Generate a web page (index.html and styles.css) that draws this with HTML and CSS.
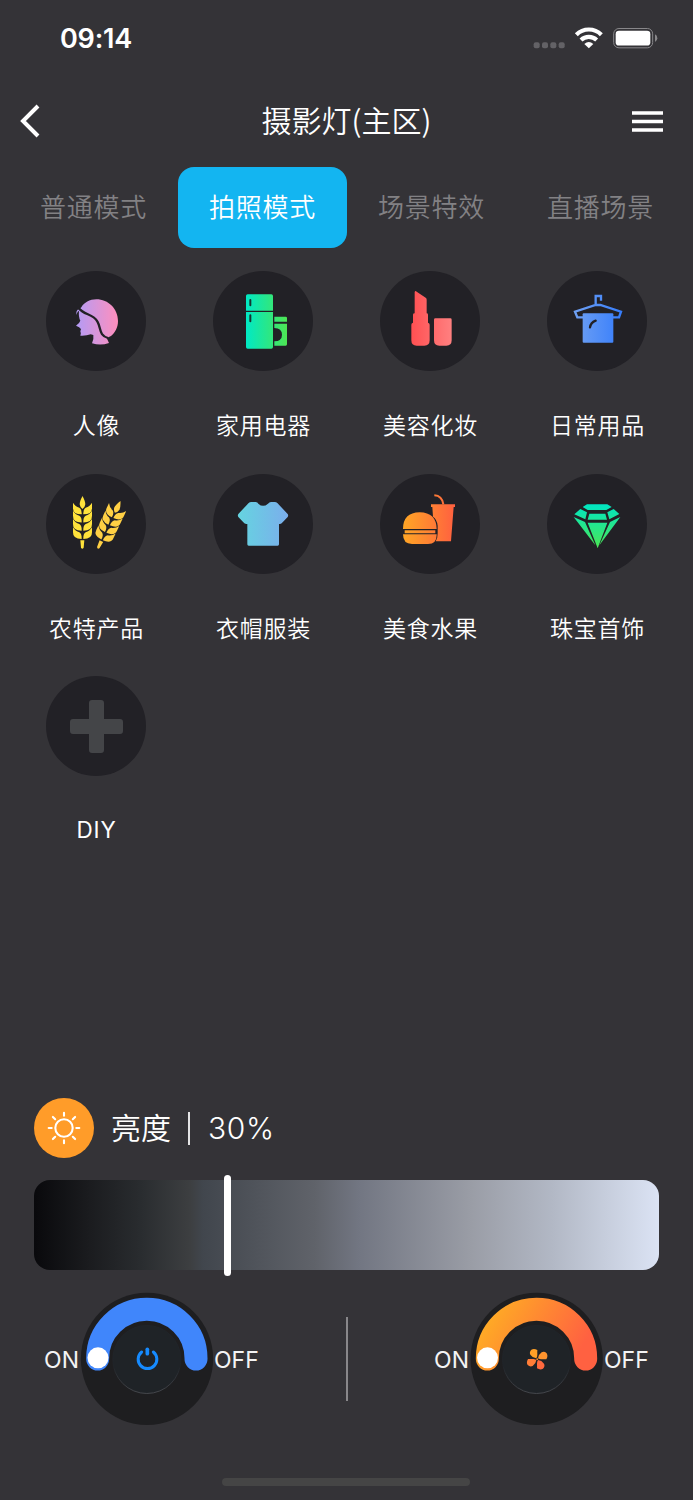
FILE: index.html
```
<!DOCTYPE html>
<html lang="zh-CN">
<head>
<meta charset="utf-8">
<title>摄影灯(主区)</title>
<link rel="stylesheet" href="styles.css">
</head>
<body>
<div class="screen">
  <div class="status">
    <span class="time">09:14</span>
    <svg class="status-icons" viewBox="36 30 384 75">
      <g fill="#636266"><rect x="41" y="79" width="18" height="18" rx="6"/><rect x="66" y="79" width="18" height="18" rx="6"/><rect x="91" y="79" width="18" height="18" rx="6"/><rect x="116" y="79" width="18" height="18" rx="6"/></g>
      <g fill="none" stroke="#fff" stroke-width="12.500"><path d="M169 56a53 53 0 0 1 75 0"/><path d="M183 72a34 34 0 0 1 47 0"/></g>
      <path fill="#fff" d="M193 84q13.500-12 27 0l-13.500 13z"/>
      <rect x="281" y="37.500" width="117" height="58" rx="16" fill="none" stroke="#88878a" stroke-width="3"/>
      <rect x="287" y="44.500" width="104" height="44" rx="10" fill="#fff"/>
      <path fill="#88878a" d="M405 55q7 4 7 11.500t-7 11.500z"/>
    </svg>
  </div>
  <header class="nav">
    <svg class="back" viewBox="0 0 24 36"><path d="M20 3L5 18l15 15" fill="none" stroke="#fff" stroke-width="4"/></svg>
    <h1 class="title">摄影灯(主区)</h1>
    <svg class="menu" viewBox="0 0 31 21"><path d="M0 2h31M0 10.500h31M0 19h31" stroke="#fff" stroke-width="3.700"/></svg>
  </header>
  <nav class="tabs">
    <span class="tab">普通模式</span>
    <span class="tab active">拍照模式</span>
    <span class="tab">场景特效</span>
    <span class="tab">直播场景</span>
  </nav>
  <main class="grid">
    <div class="item">
      <svg class="disc" viewBox="30 28 300 300">
        <defs><linearGradient id="g1"><stop offset="0" stop-color="#b39bf5"/><stop offset="1" stop-color="#ff8fbd"/></linearGradient></defs>
        <mask id="hair" maskUnits="userSpaceOnUse" x="100" y="90" width="170" height="180"><rect x="100" y="90" width="170" height="180" fill="#fff"/><path d="M128 139C143 161 171 155 184 179C196 200 188 221 216 229" fill="none" stroke="#000" stroke-width="7"/></mask>
        <path mask="url(#hair)" fill="url(#g1)" d="M136 137C144 123 161 113 181 113C217 113 246 142 246 178C246 198 237 213 225 223L212 229L219 244Q194 253 168 245Q174 230 172 220L164 218Q151 223 133 222Q136 214 133 209L135 202Q131 196 120 192Q131 184 133 177Q127 166 129 148Q124 148 122 160Q118 146 130 142Z"/>
      </svg>
      <span class="label">人像</span>
    </div>
    <div class="item">
      <svg class="disc" viewBox="531 28 300 300">
        <defs><linearGradient id="g2" gradientUnits="userSpaceOnUse" x1="630" y1="0" x2="753" y2="0"><stop offset="0" stop-color="#00e9c5"/><stop offset="1" stop-color="#4ee553"/></linearGradient></defs>
        <g fill="url(#g2)"><path d="M635 98h71q5 0 5 5v44h-81v-44q0-5 5-5zM630 151h81v105q0 5-5 5h-71q-5 0-5-5zM715 165h34q4 0 4 4v11h-38zM715 186h38v62q0 4-4 4h-34v-13q23-1 23-20t-23-20z"/></g>
        <path d="M643 115v16M643 161v18" stroke="#17342f" stroke-width="6" stroke-linecap="round"/>
      </svg>
      <span class="label">家用电器</span>
    </div>
    <div class="item">
      <svg class="disc" viewBox="30 28 300 300">
        <defs><linearGradient id="g3" gradientUnits="userSpaceOnUse" x1="124" y1="0" x2="245" y2="0"><stop offset="0" stop-color="#ff5052"/><stop offset="1" stop-color="#ff8080"/></linearGradient></defs>
        <path fill="url(#g3)" d="M134 91q2-5 6-1l27 18q3 2 3 6v41q4 0 4 4v24q5 1 5 6v47q0 16-16 16h-23q-16 0-16-16v-47q0-5 5-6v-24q0-4 5-4zM196 170h45q4 0 4 4v62q0 16-16 16h-21q-16 0-16-16v-62q0-4 4-4z"/>
      </svg>
      <span class="label">美容化妆</span>
    </div>
    <div class="item">
      <svg class="disc" viewBox="530 28 300 300">
        <defs><linearGradient id="g4" gradientUnits="userSpaceOnUse" x1="610" y1="0" x2="755" y2="0"><stop offset="0" stop-color="#70a1f2"/><stop offset="1" stop-color="#367dfc"/></linearGradient></defs>
        <path fill="none" stroke="url(#g4)" stroke-width="7" d="M692 117v-14h-16v27M638 167h-17l-7-17l62-20h14l62 20l-6 17h-19"/>
        <path fill="url(#g4)" d="M640 155h86q3 0 3 3v82q0 3-3 3h-86q-3 0-3-3v-82q0-3 3-3z"/>
        <path fill="none" stroke="#222126" stroke-width="7" stroke-linecap="round" d="M659 197q2-14 17-20"/>
      </svg>
      <span class="label">日常用品</span>
    </div>
    <div class="item">
      <svg class="disc" viewBox="30 26 300 300">
        <defs>
          <g id="pair"><path d="M111 112Q118 124 130 127Q138 132 137 147Q110 147 111 127ZM168 112Q161 124 149 127Q141 132 142 147Q169 147 168 127Z"/></g>
          <g id="ear"><path d="M139.500 92Q148 108 148 117Q147 126 139.500 131Q132 126 131 117Q131 108 139.500 92ZM133 225h12l-2 22q-4 6-8 0z"/><use href="#pair"/><use href="#pair" y="24.500"/><use href="#pair" y="49"/><use href="#pair" y="74"/></g>
        </defs>
        <use href="#ear" fill="#ffe23b"/>
        <use href="#ear" fill="#ffd044" transform="translate(253 108) rotate(25.300) translate(-139.500 -93)"/>
      </svg>
      <span class="label">农特产品</span>
    </div>
    <div class="item">
      <svg class="disc" viewBox="531 26 300 300">
        <defs><linearGradient id="g6"><stop offset="0" stop-color="#65d4e0"/><stop offset="1" stop-color="#7baeec"/></linearGradient></defs>
        <path fill="url(#g6)" d="M638 113Q641 110 646 110H659Q665 111 667 115Q681 128 696 115Q700 111 705 110H716Q721 110 724 113L755 146Q758 151 755 155L737 174Q734 177 729 176V237Q729 241 725 241H638Q634 241 634 237V176Q629 177 625 174L607 155Q604 151 607 146Z"/>
      </svg>
      <span class="label">衣帽服装</span>
    </div>
    <div class="item">
      <svg class="disc" viewBox="30 26 300 300">
        <defs><linearGradient id="g7" gradientUnits="userSpaceOnUse" x1="99" y1="0" x2="255" y2="0"><stop offset="0" stop-color="#ffa625"/><stop offset="1" stop-color="#ff6040"/></linearGradient></defs>
        <path fill="none" stroke="url(#g7)" stroke-width="6" d="M193 90Q216 91 220 117"/>
        <path fill="url(#g7)" d="M183 117H255V125H251L243 228H197Q203 220 203 204V181Q201 162 189 154L187 125H183ZM99 191Q99 142 149 141Q199 142 200 191ZM104 195H196V204H104ZM99 207H200Q201 236 174 236H126Q99 236 99 207Z"/>
      </svg>
      <span class="label">美食水果</span>
    </div>
    <div class="item">
      <svg class="disc" viewBox="530 26 300 300">
        <defs><linearGradient id="g8" gradientUnits="userSpaceOnUse" x1="0" y1="117" x2="0" y2="250"><stop offset="0" stop-color="#00e6c3"/><stop offset="1" stop-color="#4ce652"/></linearGradient></defs>
        <path fill="url(#g8)" d="M650 117H711L724 125L708 134H652L637 125ZM630 131L650 141L645 162L612 147ZM730 131L747 146L717 162L711 141ZM657 145H705L710 163H652ZM610 155L644 170L675 240ZM750 155L719 170L687 240ZM652 172H711L682 249Z"/>
      </svg>
      <span class="label">珠宝首饰</span>
    </div>
    <div class="item">
      <svg class="disc" viewBox="48 18 300 300">
        <path fill="#444548" d="M186 90h27q9 0 9 9v48h48q9 0 9 9v27q0 9-9 9h-48v48q0 9-9 9h-27q-9 0-9-9v-48h-48q-9 0-9-9v-27q0-9 9-9h48v-48q0-9 9-9z"/>
      </svg>
      <span class="label latin">DIY</span>
    </div>
  </main>
  <section class="brightness">
    <div class="bright-head">
      <svg class="sun" viewBox="0 0 60 60"><g fill="none" stroke="#fff" stroke-width="2.100" stroke-linecap="round"><circle cx="30" cy="30" r="8.700"/><path d="M30 14.700v3M30 42.300v3M14.700 30h3M42.300 30h3M18.900 18.900l2.300 2.300M38.800 38.800l2.300 2.300M18.900 41.100l2.300-2.300M38.800 21.200l2.300-2.300"/></g></svg>
      <span class="bright-name">亮度</span>
      <i class="bar"></i>
      <span class="bright-value">30%</span>
    </div>
    <div class="slider"><i class="thumb"></i></div>
  </section>
  <section class="switches">
    <div class="switch">
      <span class="on">ON</span>
      <svg class="dial" viewBox="150 20 402 402">
        <defs><linearGradient id="rim" x1="0" y1="0" x2="0" y2="1"><stop offset=".6" stop-color="#202429"/><stop offset="1" stop-color="#45474c"/></linearGradient></defs>
        <circle cx="351" cy="220.500" r="198.500" fill="#1e1e20"/>
        <path d="M203 221V219A147.500 147 0 0 1 498 219V221" fill="none" stroke="#4086fb" stroke-width="69" stroke-linecap="round"/>
        <circle cx="350.500" cy="222.500" r="102" fill="#1f2327" stroke="url(#rim)" stroke-width="3"/>
        <circle cx="204" cy="217.500" r="31.500" fill="#fff"/>
        <g fill="none" stroke="#168bff" stroke-linecap="round"><path d="M335 200A28 28 0 1 0 370 200" stroke-width="9"/><path d="M352 192v13" stroke-width="11"/></g>
      </svg>
      <span class="off">OFF</span>
    </div>
    <i class="divider"></i>
    <div class="switch">
      <span class="on">ON</span>
      <svg class="dial" viewBox="150 20 402 402">
        <defs>
          <linearGradient id="arc" gradientUnits="userSpaceOnUse" x1="220" y1="90" x2="460" y2="230"><stop offset="0" stop-color="#ffa826"/><stop offset="1" stop-color="#ff6141"/></linearGradient>
          <linearGradient id="fan" gradientUnits="userSpaceOnUse" x1="335" y1="190" x2="365" y2="252"><stop offset="0" stop-color="#ffa626"/><stop offset="1" stop-color="#ff6040"/></linearGradient>
          <path id="blade" d="M349 219C354 212 351 203 352 194Q342 188 334 193Q327 200 331 208Q338 218 349 219Z"/>
        </defs>
        <circle cx="350" cy="220.500" r="198.500" fill="#1e1e20"/>
        <path d="M202 221V219A147.500 147 0 0 1 497 219V221" fill="none" stroke="url(#arc)" stroke-width="69" stroke-linecap="round"/>
        <circle cx="349.500" cy="222.500" r="102" fill="#1f2327" stroke="url(#rim)" stroke-width="3"/>
        <circle cx="202.500" cy="217.500" r="31.500" fill="#fff"/>
        <g fill="#ff9130"><use href="#blade" fill="#ffa027"/><use href="#blade" fill="#ff942e" transform="rotate(90 351.500 221.500)"/><use href="#blade" fill="#ff693e" transform="rotate(180 351.500 221.500)"/><use href="#blade" fill="#ff7d37" transform="rotate(270 351.500 221.500)"/><circle cx="351.500" cy="221.500" r="2.500"/></g>
      </svg>
      <span class="off">OFF</span>
    </div>
  </section>
  <div class="home"></div>
</div>
</body>
</html>
```
FILE: styles.css
```
* { box-sizing: border-box; }
body { margin: 0; background: #343337; color: #fff; font-family: Inter, "Noto Sans CJK SC", sans-serif; font-weight: 350; }
svg { display: block; flex: none; }
.screen { width: 693px; height: 1500px; display: flex; flex-direction: column; overflow: hidden; }
.status { height: 76px; flex: none; display: flex; align-items: center; justify-content: space-between; padding: 0 33px 0 60px; }
.time { font-size: 27px; font-weight: 600; line-height: 32px; letter-spacing: -0.2px; padding-top: 2px; }
.status-icons { width: 128px; height: 25px; }
.nav { height: 91px; flex: none; display: grid; grid-template-columns: 24px 1fr 31px; align-items: center; padding: 0 30px 1px 18px; }
.back { width: 24px; height: 36px; }
.title { margin: 0; padding: 0 0 5px 19px; text-align: center; font: 350 30px/44px "Noto Sans CJK SC", sans-serif; }
.menu { width: 31px; height: 21px; }
.tabs { flex: none; height: 81px; padding: 0 8.500px; display: grid; grid-template-columns: repeat(4, 169px); font-family: "Noto Sans CJK SC", sans-serif; font-size: 26px; letter-spacing: 0.700px; color: #828184; }
.tab { display: flex; align-items: center; justify-content: center; border-radius: 16px; padding: 0 0 5px 1px; }
.tab.active { background: #13b5f1; color: #fff; }
.grid { flex: none; height: 850px; padding: 23px 12.500px 0; display: grid; grid-template-columns: repeat(4, 167px); grid-auto-rows: 202.500px; align-content: start; }
.item { display: flex; flex-direction: column; align-items: center; gap: 36px; }
.disc { width: 100px; height: 100px; border-radius: 50%; background: #222126; }
.label { padding-left: 1px; font: 350 23px/34px "Noto Sans CJK SC", sans-serif; letter-spacing: 0.800px; }
.label.latin { padding-top: 1px; font-family: Inter, sans-serif; font-size: 22.500px; font-weight: 400; }
.brightness { flex: none; height: 194px; padding: 0 34px; display: flex; flex-direction: column; gap: 22px; }
.bright-head { display: flex; align-items: center; height: 60px; }
.sun { width: 60px; height: 60px; border-radius: 50%; background: #ff9c29; }
.bright-name { margin-left: 17px; font: 350 30px/44px "Noto Sans CJK SC", sans-serif; padding-bottom: 4px; }
.bar { width: 2px; height: 33px; margin: 0 18px 0 17px; background: #e4e4e5; }
.bright-value { font-size: 30px; letter-spacing: 0.600px; }
.slider { height: 90px; flex: none; display: flex; align-items: center; border-radius: 16px; background: linear-gradient(90deg, #09090c 0%, #1b1c1f 9%, #292c2f 17%, #3d3f41 25%, #41464d 27%, #60636a 45%, #727682 52%, #9a9da6 70%, #b2b8c5 83%, #dbe3f4 100%); }
.thumb { width: 7px; height: 101px; margin-left: 190px; border-radius: 3.500px; background: #fff; }
.switches { flex: none; height: 134px; display: grid; grid-template-columns: 303px 87px 303px; align-items: center; }
.switch { display: grid; grid-template-columns: 80px 134px 89px; align-items: center; font-size: 23px; line-height: 28px; font-weight: 400; color: #f4f4f4; }
.on { text-align: right; padding: 2px 1px 0 0; }
.off { padding-top: 2px; }
.dial { width: 134px; height: 134px; }
.divider { width: 2px; height: 84px; justify-self: center; background: #88878a; }
.home { width: 248px; height: 8px; margin: 52px 0 0 222px; flex: none; border-radius: 4px; background: #454545; }
```
